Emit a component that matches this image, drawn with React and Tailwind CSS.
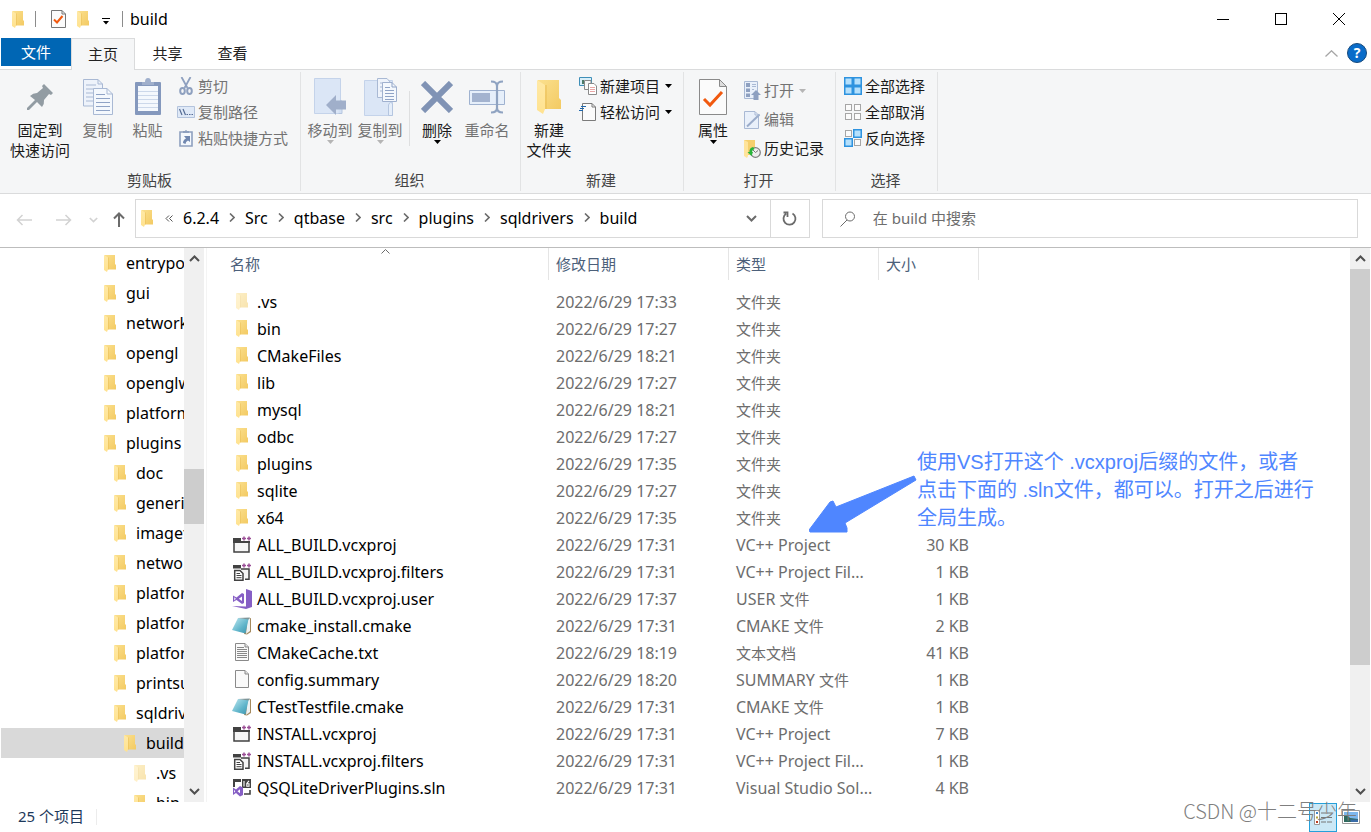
const treeItems = [
  { label: 'entrypo', depth: 0 },
  { label: 'gui', depth: 0 },
  { label: 'network', depth: 0 },
  { label: 'opengl', depth: 0 },
  { label: 'openglw', depth: 0 },
  { label: 'platform', depth: 0 },
  { label: 'plugins', depth: 0 },
  { label: 'doc', depth: 1 },
  { label: 'generi', depth: 1 },
  { label: 'imagef', depth: 1 },
  { label: 'netwo', depth: 1 },
  { label: 'platfor', depth: 1 },
  { label: 'platfor', depth: 1 },
  { label: 'platfor', depth: 1 },
  { label: 'printsu', depth: 1 },
  { label: 'sqldriv', depth: 1 },
  { label: 'build', depth: 2, selected: true },
  { label: '.vs', depth: 3, hidden: true },
  { label: 'bin', depth: 3 },
];

const files = [
  { name: '.vs', date: '2022/6/29 17:33', type: '文件夹', icon: 'hiddenFolder' },
  { name: 'bin', date: '2022/6/29 17:27', type: '文件夹', icon: 'folder' },
  { name: 'CMakeFiles', date: '2022/6/29 18:21', type: '文件夹', icon: 'folder' },
  { name: 'lib', date: '2022/6/29 17:27', type: '文件夹', icon: 'folder' },
  { name: 'mysql', date: '2022/6/29 18:21', type: '文件夹', icon: 'folder' },
  { name: 'odbc', date: '2022/6/29 17:27', type: '文件夹', icon: 'folder' },
  { name: 'plugins', date: '2022/6/29 17:35', type: '文件夹', icon: 'folder' },
  { name: 'sqlite', date: '2022/6/29 17:27', type: '文件夹', icon: 'folder' },
  { name: 'x64', date: '2022/6/29 17:35', type: '文件夹', icon: 'folder' },
  { name: 'ALL_BUILD.vcxproj', date: '2022/6/29 17:31', type: 'VC++ Project', size: '30 KB', icon: 'project' },
  { name: 'ALL_BUILD.vcxproj.filters', date: '2022/6/29 17:31', type: 'VC++ Project Fil...', size: '1 KB', icon: 'filters' },
  { name: 'ALL_BUILD.vcxproj.user', date: '2022/6/29 17:37', type: 'USER 文件', size: '1 KB', icon: 'user' },
  { name: 'cmake_install.cmake', date: '2022/6/29 17:31', type: 'CMAKE 文件', size: '2 KB', icon: 'cmake' },
  { name: 'CMakeCache.txt', date: '2022/6/29 18:19', type: '文本文档', size: '41 KB', icon: 'text' },
  { name: 'config.summary', date: '2022/6/29 18:20', type: 'SUMMARY 文件', size: '1 KB', icon: 'blank' },
  { name: 'CTestTestfile.cmake', date: '2022/6/29 17:31', type: 'CMAKE 文件', size: '1 KB', icon: 'cmake' },
  { name: 'INSTALL.vcxproj', date: '2022/6/29 17:31', type: 'VC++ Project', size: '7 KB', icon: 'project' },
  { name: 'INSTALL.vcxproj.filters', date: '2022/6/29 17:31', type: 'VC++ Project Fil...', size: '1 KB', icon: 'filters' },
  { name: 'QSQLiteDriverPlugins.sln', date: '2022/6/29 17:31', type: 'Visual Studio Sol...', size: '4 KB', icon: 'solution' },
];

const crumbs = ['6.2.4', 'Src', 'qtbase', 'src', 'plugins', 'sqldrivers', 'build'];

/* ---------- Icons ---------- */

function FolderIcon({ className = 'h-[17px] w-3' }) {
  return (
    <svg viewBox="0 0 24 34" preserveAspectRatio="none" className={`shrink-0 ${className}`}>
      <defs>
        <linearGradient id="folderBack" x1="0" y1="0" x2="1" y2="1">
          <stop offset="0" stopColor="#fbe08e" />
          <stop offset="1" stopColor="#f3ca63" />
        </linearGradient>
        <linearGradient id="folderFlap" x1="0" y1="0" x2="0" y2="1">
          <stop offset="0" stopColor="#ffe9a6" />
          <stop offset="1" stopColor="#ffe28f" />
        </linearGradient>
      </defs>
      <path d="M1 0H22V18L24 20V29H1Z" fill="url(#folderBack)" />
      <path d="M0 0L8 5V29L6 34L0 30Z" fill="url(#folderFlap)" />
      <path d="M8 5V29H10V5Z" fill="#e5b748" opacity=".4" />
    </svg>
  );
}

function PlusPlus() {
  return <path d="M10 2.500H14M12 .500V4.500M15 2.500H19M17 .500V4.500" stroke="#9b4f96" strokeWidth="1.500" />;
}

function ProjectIcon() {
  return (
    <svg viewBox="0 0 20 18" className="h-[18px] w-5 shrink-0" fill="none">
      <path d="M2 6H17V16H2Z" fill="#f6f6f6" stroke="#424242" strokeWidth="1.500" />
      <path d="M1 2H9V5H18V7H1Z" fill="#424242" />
      <PlusPlus />
    </svg>
  );
}

function FiltersIcon() {
  return (
    <svg viewBox="0 0 20 18" className="h-[18px] w-5 shrink-0" fill="none">
      <path d="M1 2H9V5.500H1Z" fill="#424242" />
      <path d="M9 6H17V16.200H13" fill="#f6f6f6" stroke="#424242" strokeWidth="1.500" />
      <path d="M2.700 7.500H8L11 10.500V17.200H2.700Z" fill="#fff" stroke="#424242" strokeWidth="1.500" />
      <path d="M4.500 10.500H8M4.500 12.500H9.500M4.500 14.700H9.500" stroke="#424242" />
      <PlusPlus />
    </svg>
  );
}

function VisualStudioIcon() {
  return (
    <svg viewBox="0 0 20 20" className="h-5 w-5 shrink-0">
      <path d="M14 0L20 2V18L14 20L0 17L14 17.500Z" fill="#865fc5" />
      <path d="M1 6.500L4.500 8.500L10 4L12 5V14L10 15L4.500 11L1 13ZM2.300 8.200V11.500L3.800 9.800ZM10 7.500L6.800 9.800L10 12Z" fill="#865fc5" fillRule="evenodd" />
    </svg>
  );
}

function NotebookIcon() {
  return (
    <svg viewBox="0 0 20 18" className="h-[18px] w-5 shrink-0">
      <defs>
        <linearGradient id="notebook" x1="0" y1="0" x2="1" y2="1">
          <stop offset="0" stopColor="#bfe9f1" />
          <stop offset=".6" stopColor="#5fb4ca" />
          <stop offset="1" stopColor="#3d93ac" />
        </linearGradient>
      </defs>
      <path d="M16 2L19 1V15L15 17.500L12 17Z" fill="#a58a5e" />
      <path d="M15.500 2L18 2V14L14 17Z" fill="#edf1f2" />
      <path d="M6 1L16.500 2L13.500 16.500L0 13Z" fill="url(#notebook)" />
      <path d="M6 1L18 .500L16.500 2.500Z" fill="#7e9599" />
    </svg>
  );
}

function PageIcon({ lines }) {
  return (
    <svg viewBox="0 0 16 19" className="h-[19px] w-4 shrink-0" fill="none">
      <path d="M1.500 .500H11L14.500 4V17.500H1.500Z" fill="#fafafa" stroke="#8a8a8a" />
      <path d="M11 .500V4H14.500" stroke="#8a8a8a" fill="#e2e2e2" />
      {lines && <path d="M3 4.500H10M3 6.500H13M3 8.500H13M3 10.500H13M3 12.500H13M3 14.500H13" stroke="#888" />}
    </svg>
  );
}

function SolutionIcon() {
  return (
    <svg viewBox="0 0 20 19" className="h-[19px] w-5 shrink-0" fill="none">
      <path d="M1 1H9V4H3V9H1Z" fill="#424242" />
      <path d="M10 1H19V10H10Z" fill="#424242" />
      <path d="M12 3V8.500M17 2.800L14.800 5.500V8.300H17V5.800H15" stroke="#fff" strokeWidth="1.100" />
      <path d="M12 16H18V12" stroke="#424242" strokeWidth="1.600" />
      <path d="M1 9.500L4 11.500L8 8L11 9.500V17L8 18.500L4 15L1 17ZM2 12V14.800L3.300 13.300ZM8 11.300L5.500 13.300L8 15.200Z" fill="#865fc5" fillRule="evenodd" />
    </svg>
  );
}

function FileIcon({ kind }) {
  switch (kind) {
    case 'folder':
      return <FolderIcon />;
    case 'hiddenFolder':
      return <FolderIcon className="h-[17px] w-3 opacity-50" />;
    case 'project':
      return <ProjectIcon />;
    case 'filters':
      return <FiltersIcon />;
    case 'user':
      return <VisualStudioIcon />;
    case 'cmake':
      return <NotebookIcon />;
    case 'text':
      return <PageIcon lines />;
    case 'solution':
      return <SolutionIcon />;
    default:
      return <PageIcon />;
  }
}

function CheckDocIcon({ className }) {
  return (
    <svg viewBox="0 0 28 36" className={className} fill="none">
      <path d="M.500 .500H20.500L27.500 7.500V35.500H.500Z" fill="#fbfbfb" stroke="#8a8a8a" />
      <path d="M20.500 .500V7.500H27.500Z" fill="#ddd" stroke="#8a8a8a" />
      <path d="M5 20L11 26L23 13" stroke="#f1590f" strokeWidth="3" />
    </svg>
  );
}

function SmallCheckDocIcon() {
  return (
    <svg viewBox="0 0 15 18" className="h-[18px] w-[15px]" fill="none">
      <path d="M.500 .500H11L14.500 4V17.500H.500Z" fill="#fbfbfb" stroke="#777" />
      <path d="M11 .500V4H14.500" stroke="#777" />
      <path d="M3 9.500L6 12.500L11.500 6" stroke="#f1590f" strokeWidth="2" />
    </svg>
  );
}

function PinIcon() {
  return (
    <svg viewBox="0 0 26 26" className="h-[26px] w-[26px]">
      <path d="M17 0L26 9L24 11L22 10L17 16Q17.500 20 15 23L10 18L2 26H0V24L8 16L3 12Q6 9 10 9L16 4L15 2Z" fill="#929ca3" />
    </svg>
  );
}

function CopyIcon() {
  return (
    <svg viewBox="0 0 30 36" className="h-9 w-[30px]" fill="none" stroke="#a9b9d4">
      <path d="M.500 .500H15L19.500 5V27H.500Z" fill="#eef3fb" />
      <path d="M15 .500V5H19.500M3 6H13M3 10H17M3 14H10M3 18H10M3 22H10" />
      <path d="M10.500 9.500H24L29.500 15V35.500H10.500Z" fill="#f4f8fd" />
      <path d="M24 9.500V15H29.500" />
      <path d="M13 15.500H22M13 19.500H27M13 23.500H27M13 27.500H27M13 31.500H27" stroke="#8fa3c6" />
    </svg>
  );
}

function PasteIcon() {
  return (
    <svg viewBox="0 0 26 37" className="h-[37px] w-[26px]">
      <rect y="4" width="26" height="33" rx="1" fill="#8498bd" />
      <path d="M3 8H23V33H3Z" fill="#f4f8fd" />
      <path d="M3 13.500H23M3 17.500H23M3 21.500H23M3 25.500H23M3 29.500H23" stroke="#ccd8ea" />
      <path d="M7 7V4H10Q10 0 13 0T16 4H19V7Z" fill="#9fafcc" />
    </svg>
  );
}

function ScissorsIcon() {
  return (
    <svg viewBox="0 0 14 18" className="h-[18px] w-[14px]" fill="none" stroke="#8ea0bf">
      <path d="M2.500 0L8.500 11M11.500 0L5.500 11" strokeWidth="1.800" />
      <ellipse cx="3.500" cy="14" rx="2.300" ry="3" strokeWidth="2" />
      <ellipse cx="10.500" cy="14" rx="2.300" ry="3" strokeWidth="2" />
    </svg>
  );
}

function CopyPathIcon() {
  return (
    <svg viewBox="0 0 18 12" className="h-3 w-[18px]">
      <path d="M.500 .500H17.500V11.500H.500Z" fill="#dfe9f7" stroke="#b3c3dc" />
      <path d="M2.500 3L5 9M6 3L8.500 9M9.500 8.500H11M12 8.500H13.500M14.500 8.500H16" stroke="#566d95" strokeWidth="1.200" />
    </svg>
  );
}

function PasteShortcutIcon() {
  return (
    <svg viewBox="0 0 14 18" className="h-[18px] w-[14px]">
      <path d="M1 3H13V17H1Z" fill="#f4f8fd" stroke="#8ea0bf" strokeWidth="1.600" />
      <path d="M4 4V2H6Q7 0 8 2H10V4Z" fill="#8ea0bf" />
      <path d="M5 7H11V13L9 11.500Q6.500 12.500 6.500 15L4 14Q4 11 7 9.500Z" fill="#7087b0" />
    </svg>
  );
}

function MoveToIcon() {
  return (
    <svg viewBox="0 0 32 37" className="h-[37px] w-8">
      <path d="M.500 .500H26.500V35.500H.500Z" fill="#dbe6f6" stroke="#c4d3ea" />
      <path d="M25 24Q28 20 28 26V35.500H24.500" fill="#d3e0f3" stroke="#b5c6e0" />
      <path d="M12 27L22 17V22.500H32V31.500H22V37Z" fill="#a0afca" />
    </svg>
  );
}

function CopyToIcon() {
  return (
    <svg viewBox="0 0 33 38" className="h-[38px] w-[33px]" fill="none">
      <path d="M.500 2.500H28.500V37.500H.500Z" fill="#dbe6f6" stroke="#c4d3ea" />
      <path d="M24.500 37.500V27Q26.500 22 28.500 26V37.500Z" fill="#e5eefa" stroke="#b5c6e0" />
      <path d="M13.500 .500H23L27 5V19.500H13.500Z" fill="#eef3fb" stroke="#a9b9d4" />
      <path d="M16 5H22M16 9H19M16 13H19" stroke="#a9b9d4" />
      <path d="M18.500 4.500H28L32.500 9V23.500H18.500Z" fill="#f4f8fd" stroke="#a0b1cf" />
      <path d="M28 4.500V9H32.500M21 9.500H26M21 12.500H30M21 15.500H30M21 18.500H30M21 21.500H30" stroke="#8fa3c6" />
    </svg>
  );
}

function DeleteIcon() {
  return (
    <svg viewBox="0 0 32 32" className="h-8 w-8">
      <path d="M2 2L30 30M30 2L2 30" stroke="#8093b5" strokeWidth="6" />
    </svg>
  );
}

function RenameIcon() {
  return (
    <svg viewBox="0 0 36 34" className="h-[34px] w-9" fill="none">
      <path d="M.500 10.500H35.500V24.500H.500Z" fill="#e6effa" stroke="#9fb2d0" />
      <path d="M3 13H21V22H3Z" fill="#a3b3cf" />
      <path d="M22 1.500Q28 1.500 28 6V28Q28 32.500 22 32.500M34 1.500Q28 1.500 28 6M28 28Q28 32.500 34 32.500" stroke="#8fa3c1" strokeWidth="2.200" />
    </svg>
  );
}

function NewItemIcon() {
  return (
    <svg viewBox="0 0 18 18" className="h-[18px] w-[18px]" fill="none">
      <path d="M.500 .500H12.500V8.500H.500Z" fill="#d9eff9" stroke="#3f8fb8" />
      <path d="M3 3H5V7H3Z" fill="#4c7a68" />
      <path d="M5.500 3.500H12V12.500H5.500Z" fill="#f8f8f8" stroke="#8a8a8a" />
      <path d="M9.500 6.500H15L17.500 9V17.500H9.500Z" fill="#fff" stroke="#8a8a8a" />
      <path d="M11 10.500H16M11 12.500H16M11 14.500H16" stroke="#eaa6a6" />
    </svg>
  );
}

function EasyAccessIcon() {
  return (
    <svg viewBox="0 0 18 18" className="h-[18px] w-[18px]" fill="none">
      <path d="M3.500 .500H13L16.500 4V17.500H3.500Z" fill="#fbfbfb" stroke="#7b7b7b" />
      <path d="M13 .500V4H16.500" stroke="#7b7b7b" />
      <path d="M2 3.500H7M1 5.500H5M0 7.500H4" stroke="#1f68ad" strokeWidth="1.200" />
    </svg>
  );
}

function OpenIcon() {
  return (
    <svg viewBox="0 0 17 19" className="h-[19px] w-[17px]" fill="none">
      <path d="M.500 .500H13.500V17.500H.500Z" fill="#e9f0fa" stroke="#a9b9d4" />
      <path d="M2 2H6V6H2ZM2 7.500H6V11H2ZM2 12.500H6V16H2Z" fill="#8ea0c0" />
      <path d="M8 3.500H12M8 5.500H12M8 8.500H10" stroke="#a9b9d4" />
      <path d="M12 9L17 14H14.500V19H9.500V14H7Z" fill="#8ea0c0" />
    </svg>
  );
}

function EditIcon() {
  return (
    <svg viewBox="0 0 17 18" className="h-[18px] w-[17px]" fill="none">
      <path d="M.500 .500H11L14.500 4V17.500H.500Z" fill="#e9f0fa" stroke="#a9b9d4" />
      <path d="M3 15.500L15.500 3.500" stroke="#9bacca" strokeWidth="2" />
      <path d="M11 1V4H16" stroke="#a9b9d4" />
    </svg>
  );
}

function HistoryIcon() {
  return (
    <svg viewBox="0 0 17 18" className="h-[18px] w-[17px]">
      <path d="M0 0H11V15H0Z" fill="#f5cf6d" />
      <path d="M0 0L4 2V16L3 18L0 16Z" fill="#ffe49b" />
      <circle cx="11.500" cy="12.500" r="4.800" fill="#eee" stroke="#7d7d7d" strokeWidth="1.200" />
      <path d="M9 10L11.500 12.500L14 10.500" stroke="#777" fill="none" />
      <path d="M9 7Q5 8 5.500 12H3.500L7.500 16L9 12H8Q8 10 10.500 9Z" fill="#29b43a" />
    </svg>
  );
}

function SelectIcon({ filled }) {
  const cells = [[0.5, 0.5], [9.5, 0.5], [0.5, 9.5], [9.5, 9.5]];
  return (
    <svg viewBox="0 0 18 18" className="h-[18px] w-[18px]">
      {cells.map(([x, y], i) =>
        filled.includes(i) ? (
          <rect key={i} x={x + 0.25} y={y + 0.25} width="7.500" height="7.500" fill="#b5e0fc" stroke="#2e93df" strokeWidth="1.500" />
        ) : (
          <rect key={i} x={x + 1} y={y + 1} width="6" height="6" fill="#fbfbfb" stroke="#a6a6a6" />
        )
      )}
    </svg>
  );
}

function Chevron({ dir = 'down', className = 'h-[7px] w-[11px]' }) {
  const paths = { down: 'M1 1L5.500 5.500L10 1', up: 'M1 6L5.500 1.500L10 6' };
  return (
    <svg viewBox="0 0 11 7" className={className} fill="none" stroke="currentColor" strokeWidth="2">
      <path d={paths[dir]} />
    </svg>
  );
}

function Caret({ className = 'text-black' }) {
  return (
    <svg viewBox="0 0 7 4" className={`h-1 w-[7px] shrink-0 ${className}`}>
      <path d="M0 0H7L3.500 4Z" fill="currentColor" />
    </svg>
  );
}

/* ---------- Ribbon ---------- */

function RibbonGroup({ title, className, children }) {
  return (
    <section aria-label={title} className={`flex h-[119px] shrink-0 flex-col border-r border-[#e2e3e4] ${className}`}>
      <div className="flex flex-1 items-start">{children}</div>
      <div className="pr-[2px] pb-px text-center leading-5 text-[#444]">{title}</div>
    </section>
  );
}

function LargeButton({ icon, lines, caret, disabled, className = 'w-[50px]' }) {
  return (
    <button type="button" className={`flex shrink-0 flex-col items-center pt-[6px] leading-5 ${disabled ? 'text-[#737373]' : 'text-[#1a1a1a]'} ${className}`}>
      <span className="mb-[5px] flex h-[37px] items-center">{icon}</span>
      {lines.map((line) => (
        <span key={line} className="whitespace-nowrap">{line}</span>
      ))}
      {caret && <Caret className={disabled ? 'text-[#b5b5b5]' : 'text-black'} />}
    </button>
  );
}

function SmallButton({ icon, label, caret, disabled, className = 'h-[26px]' }) {
  return (
    <button type="button" className={`flex items-center whitespace-nowrap ${disabled ? 'text-[#737373]' : 'text-[#1a1a1a]'} ${className}`}>
      <span className="mr-[3px] flex w-[18px] justify-center">{icon}</span>
      {label}
      {caret && <span className="ml-[5px]"><Caret className={disabled ? 'text-[#b5b5b5]' : 'text-black'} /></span>}
    </button>
  );
}

function Ribbon() {
  return (
    <div className="flex border-b border-[#dadbdc] bg-[#f5f6f7] pt-[2px] pb-[2px] pl-px">
      <RibbonGroup title="剪贴板" className="w-[300px]">
        <LargeButton className="ml-1 w-[70px]" icon={<PinIcon />} lines={['固定到', '快速访问']} />
        <LargeButton className="w-[45px]" disabled icon={<CopyIcon />} lines={['复制']} />
        <LargeButton className="w-[55px]" disabled icon={<PasteIcon />} lines={['粘贴']} />
        <div className="flex flex-col pt-px pl-[2px]">
          <SmallButton disabled icon={<ScissorsIcon />} label="剪切" />
          <SmallButton disabled icon={<CopyPathIcon />} label="复制路径" />
          <SmallButton disabled icon={<PasteShortcutIcon />} label="粘贴快捷方式" />
        </div>
      </RibbonGroup>
      <RibbonGroup title="组织" className="w-[220px]">
        <LargeButton className="ml-1 w-[50px]" disabled caret icon={<MoveToIcon />} lines={['移动到']} />
        <LargeButton disabled caret icon={<CopyToIcon />} lines={['复制到']} />
        <span className="mt-[19px] ml-1 h-[55px] w-px bg-[#dedfe0]" />
        <LargeButton className="ml-[2px] w-[50px]" caret icon={<DeleteIcon />} lines={['删除']} />
        <LargeButton disabled icon={<RenameIcon />} lines={['重命名']} />
      </RibbonGroup>
      <RibbonGroup title="新建" className="w-[163px]">
        <LargeButton className="ml-[3px] w-[50px]" icon={<FolderIcon className="h-[34px] w-6" />} lines={['新建', '文件夹']} />
        <div className="flex flex-col pt-px pl-[5px]">
          <SmallButton caret icon={<NewItemIcon />} label="新建项目" />
          <SmallButton caret icon={<EasyAccessIcon />} label="轻松访问" />
        </div>
      </RibbonGroup>
      <RibbonGroup title="打开" className="w-[152px]">
        <LargeButton className="ml-1 w-[50px]" caret icon={<CheckDocIcon className="h-9 w-7" />} lines={['属性']} />
        <div className="flex flex-col pt-1 pl-[5px]">
          <SmallButton className="h-[29px]" disabled caret icon={<OpenIcon />} label="打开" />
          <SmallButton className="h-[29px]" disabled icon={<EditIcon />} label="编辑" />
          <SmallButton className="h-[29px]" icon={<HistoryIcon />} label="历史记录" />
        </div>
      </RibbonGroup>
      <RibbonGroup title="选择" className="w-[102px]">
        <div className="flex flex-col pt-px pl-2">
          <SmallButton icon={<SelectIcon filled={[0, 1, 2, 3]} />} label="全部选择" />
          <SmallButton icon={<SelectIcon filled={[]} />} label="全部取消" />
          <SmallButton icon={<SelectIcon filled={[1, 2]} />} label="反向选择" />
        </div>
      </RibbonGroup>
    </div>
  );
}

/* ---------- Window chrome ---------- */

function TitleBar() {
  return (
    <header className="flex h-[38px] shrink-0 items-center pr-[3px] pl-3 text-base">
      <FolderIcon />
      <span className="ml-[11px] h-4 w-px bg-[#8c8c8c]" />
      <button type="button" aria-label="属性" className="ml-[15px]"><SmallCheckDocIcon /></button>
      <button type="button" aria-label="新建文件夹" className="ml-[11px]"><FolderIcon /></button>
      <button type="button" aria-label="自定义快速访问工具栏" className="ml-[13px]">
        <svg viewBox="0 0 8 7" className="mt-1 h-[7px] w-2">
          <path d="M0 0H8V1H0ZM1 3H7L4 6.500Z" />
        </svg>
      </button>
      <span className="ml-3 h-4 w-px bg-[#8c8c8c]" />
      <h1 className="ml-[7px] leading-6">build</h1>
      <div className="ml-auto flex self-stretch">
        <button type="button" aria-label="最小化" className="flex w-[58px] items-center justify-center">
          <span className="h-px w-3 bg-black" />
        </button>
        <button type="button" aria-label="最大化" className="flex w-[58px] items-center justify-center">
          <span className="h-3 w-3 border border-black" />
        </button>
        <button type="button" aria-label="关闭" className="flex w-[58px] items-center justify-center">
          <svg viewBox="0 0 12 12" className="h-3 w-3" stroke="#000"><path d="M0 0L12 12M12 0L0 12" /></svg>
        </button>
      </div>
    </header>
  );
}

function TabBar() {
  return (
    <nav className="flex h-8 shrink-0 items-start border-b border-[#dadbdc] pl-px">
      <button type="button" className="h-7 w-[70px] bg-[#0066b4] text-white">文件</button>
      <button type="button" className="h-8 w-16 border border-b-0 border-[#dadbdc] bg-[#f5f6f7] text-[#222]">主页</button>
      <button type="button" className="h-[31px] w-[65px] text-[#222]">共享</button>
      <button type="button" className="h-[31px] w-[65px] text-[#222]">查看</button>
      <div className="ml-auto flex h-[30px] items-center gap-[9px] pr-1">
        <button type="button" aria-label="最小化功能区" className="text-[#a6a6a6]">
          <svg viewBox="0 0 13 7" className="h-[7px] w-[13px]" fill="none" stroke="currentColor" strokeWidth="1.300"><path d="M.500 6.500L6.500 .800L12.500 6.500" /></svg>
        </button>
        <button type="button" aria-label="帮助" className="flex h-5 w-5 items-center justify-center rounded-full border border-[#174a7c] bg-[#0a6cc9] text-sm font-bold text-white">?</button>
      </div>
    </nav>
  );
}

function AddressBar() {
  return (
    <div className="flex h-[53px] shrink-0 items-center pr-[13px] pb-1 text-base">
      <div className="flex w-[135px] shrink-0 items-center pt-[2px] pl-4 text-[#d2d2d2]">
        <button type="button" aria-label="后退">
          <svg viewBox="0 0 16 12" className="h-3 w-4" fill="none" stroke="currentColor" strokeWidth="1.500"><path d="M6.500 1L1.500 6L6.500 11M1.500 6H16" /></svg>
        </button>
        <button type="button" aria-label="前进" className="ml-6">
          <svg viewBox="0 0 16 12" className="h-3 w-4" fill="none" stroke="currentColor" strokeWidth="1.500"><path d="M9.500 1L14.500 6L9.500 11M14.500 6H0" /></svg>
        </button>
        <button type="button" aria-label="最近浏览的位置" className="ml-[17px]">
          <Chevron className="h-[6px] w-[9px]" />
        </button>
        <button type="button" aria-label="上移" className="ml-[15px] text-[#6b6b6b]">
          <svg viewBox="0 0 12 15" className="h-[15px] w-3" fill="none" stroke="currentColor" strokeWidth="2"><path d="M1 6.500L6 1.500L11 6.500M6 1.500V15" /></svg>
        </button>
      </div>
      <div className="flex h-[39px] min-w-0 flex-[675] items-center border border-[#d9d9d9]">
        <span className="ml-[5px]"><FolderIcon /></span>
        <span className="ml-3 text-[#555]">
          <svg viewBox="0 0 8 7" className="h-[7px] w-2" fill="none" stroke="currentColor"><path d="M4 .500L1 3.500L4 6.500M7.500 .500L4.500 3.500L7.500 6.500" /></svg>
        </span>
        <ol className="ml-[10px] flex min-w-0 flex-1 items-center pb-[2px] text-black">
          {crumbs.map((crumb, i) => (
            <li key={crumb} className="flex items-center">
              {i > 0 && (
                <svg viewBox="0 0 6 9" className="mx-[10px] h-[9px] w-[6px]" fill="none" stroke="#6b6b6b" strokeWidth="1.600"><path d="M1 .500L5 4.500L1 8.500" /></svg>
              )}
              <a href="#" className="leading-6">{crumb}</a>
            </li>
          ))}
        </ol>
        <button type="button" aria-label="上一个位置" className="mr-[13px] text-[#6b6b6b]"><Chevron /></button>
        <button type="button" aria-label="刷新" className="flex h-full w-[39px] items-center justify-center border-l border-[#d9d9d9]">
          <svg viewBox="0 0 15 15" className="h-[15px] w-[15px]" fill="none" stroke="#6b6b6b" strokeWidth="1.800"><path d="M10.500 2.500A6 6 0 1 1 4 2.800M1.500 1.500H5.500V6" /></svg>
        </button>
      </div>
      <label className="ml-3 flex h-[39px] min-w-0 flex-[536] items-center border border-[#d9d9d9]">
        <svg viewBox="0 0 16 16" className="ml-[17px] h-4 w-4 shrink-0" fill="none" stroke="#6b6b6b"><circle cx="10" cy="5.500" r="4.500" /><path d="M7 9L.500 15.500" /></svg>
        <input type="search" aria-label="搜索" placeholder="在 build 中搜索" className="ml-[17px] min-w-0 flex-1 bg-transparent text-[15px] outline-none placeholder:text-[#6d6d6d]" />
      </label>
    </div>
  );
}

/* ---------- Panes ---------- */

function Scrollbar({ before, thumb, after }) {
  return (
    <div className="flex w-5 shrink-0 flex-col bg-[#f0f0f0] text-[#505050]">
      <button type="button" aria-label="向上滚动" className="flex h-[21px] items-center justify-center"><Chevron dir="up" /></button>
      <div className="flex flex-1 flex-col">
        <span style={{ flexGrow: before }} />
        <span className="bg-[#cdcdcd]" style={{ flexGrow: thumb }} />
        <span style={{ flexGrow: after }} />
      </div>
      <button type="button" aria-label="向下滚动" className="flex h-[21px] items-center justify-center"><Chevron /></button>
    </div>
  );
}

const indents = ['pl-[103px]', 'pl-[113px]', 'pl-[123px]', 'pl-[133px]'];

function FolderTree() {
  return (
    <aside className="flex w-[206px] shrink-0 pl-px text-base text-black">
      <ul className="min-w-0 flex-1 overflow-hidden">
        {treeItems.map((item, i) => (
          <li key={i} className={item.selected ? 'bg-[#d9d9d9]' : ''}>
            <a href="#" className={`flex h-[30px] items-center whitespace-nowrap ${indents[item.depth]}`}>
              <FolderIcon className={item.hidden ? 'h-[17px] w-3 opacity-50' : 'h-[17px] w-3'} />
              <span className="ml-[10px]">{item.label}</span>
            </a>
          </li>
        ))}
      </ul>
      <div className="mr-[2px] flex">
        <Scrollbar before={200} thumb={55} after={257} />
      </div>
    </aside>
  );
}

// Chinese runs are set one pixel smaller than the Latin text around them
function MixedText({ text }) {
  return text.split(/([\u4e00-\u9fff]+)/).map((part, i) =>
    i % 2 ? <span key={i} className="text-[15px]">{part}</span> : part
  );
}

function HeaderCell({ children, className = 'pl-[7px]' }) {
  return (
    <th scope="col" className="p-0 pb-2 text-left text-[15px] font-normal text-[#4c607a]">
      <div className={`flex h-8 items-center border-r border-[#e5e5e5] ${className}`}>{children}</div>
    </th>
  );
}

function FileTable() {
  return (
    <table className="w-full table-fixed border-collapse text-base">
      <colgroup>
        <col className="w-[342px]" />
        <col className="w-[180px]" />
        <col className="w-[150px]" />
        <col className="w-[100px]" />
        <col />
      </colgroup>
      <thead>
        <tr>
          <HeaderCell className="relative pl-[23px]">
            名称
            <svg viewBox="0 0 9 5" className="absolute top-px left-[51%] h-[5px] w-[9px]" fill="none" stroke="#6b6b6b"><path d="M.500 4.500L4.500 .500L8.500 4.500" /></svg>
          </HeaderCell>
          <HeaderCell>修改日期</HeaderCell>
          <HeaderCell>类型</HeaderCell>
          <HeaderCell>大小</HeaderCell>
          <td />
        </tr>
      </thead>
      <tbody className="text-[#6d6d6d]">
        {files.map((file) => (
          <tr key={file.name} className="h-[27px] whitespace-nowrap">
            <td className="p-0 pl-[25px] text-black">
              <div className="flex items-center gap-[5px]">
                <span className="flex h-5 w-5 items-center justify-center">
                  <FileIcon kind={file.icon} />
                </span>
                {file.name}
              </div>
            </td>
            <td className="p-0 pl-[7px]">{file.date}</td>
            <td className="p-0 pl-[7px]"><MixedText text={file.type} /></td>
            <td className="p-0 pr-[10px] text-right">{file.size}</td>
            <td />
          </tr>
        ))}
      </tbody>
    </table>
  );
}

function Annotation() {
  return (
    <>
      <svg viewBox="0 0 108 58" className="absolute top-[227px] left-[602px] h-[58px] w-[108px]">
        <path d="M105 1L107 5L36 48L38 53V57H1L0 55L21 27L24 26L27 32Z" fill="#4f86ff" stroke="#4f86ff" strokeLinejoin="round" />
      </svg>
      <p className="absolute top-[200px] left-[710px] font-['Liberation_Sans','Noto_Sans_CJK_SC',sans-serif] text-xl leading-7 whitespace-nowrap text-[#4f86ff]">
        使用VS打开这个 .vcxproj后缀的文件，或者<br />
        点击下面的 .sln文件，都可以。打开之后进行<br />
        全局生成。
      </p>
    </>
  );
}

function StatusBar() {
  return (
    <footer className="relative flex h-[30px] shrink-0 items-center pr-[11px] pl-[18px] text-[#1e395b]">
      <span className="pb-[2px]">25 个项目</span>
      <span className="ml-3 h-4 w-px bg-[#ececec]" />
      <div className="ml-auto flex items-center gap-[5px]">
        <button type="button" aria-label="详细信息" className="flex h-[29px] w-7 items-center justify-center border border-[#26a0da] bg-[#cbe8f6]">
          <svg viewBox="0 0 18 15" className="h-[15px] w-[18px]" fill="none">
            <path d="M.500 .500H5.500V14.500H.500Z" fill="#fff" stroke="#999" />
            <path d="M2 2H4V4H2Z" fill="#3f86c9" />
            <path d="M2 6.500H4V8.500H2Z" fill="#b3a23a" />
            <path d="M2 11H4V13H2Z" fill="#bd3c1f" />
            <path d="M7 3H12M13 3H18M7 7.500H12M13 7.500H18M7 12H12M13 12H18" stroke="#777" />
          </svg>
        </button>
        <button type="button" aria-label="大缩略图">
          <svg viewBox="0 0 18 14" className="h-[14px] w-[18px]">
            <path d="M.500 .500H17.500V13.500H.500Z" fill="#fff" stroke="#999" />
            <path d="M2 2H16V12H2Z" fill="#7db8ee" />
            <path d="M2 5Q6 5 8 8L16 9V12H2Z" fill="#2f6a5e" />
            <path d="M8 9.500H16V12H9Z" fill="#3a6ca8" />
          </svg>
        </button>
      </div>
      <span className="pointer-events-none absolute right-[14px] bottom-[7px] font-['Noto_Sans_CJK_SC',sans-serif] text-xl leading-7 font-light whitespace-nowrap text-[#7f7f7f]">CSDN @十二号少年</span>
    </footer>
  );
}

export default function App() {
  return (
    <div className="flex h-screen flex-col overflow-hidden bg-white font-['Noto_Sans','Noto_Sans_CJK_SC',sans-serif] text-[15px]">
      <TitleBar />
      <TabBar />
      <Ribbon />
      <AddressBar />
      <main className="flex min-h-0 flex-1 border-t border-[#bdbdbd]">
        <FolderTree />
        <div className="relative min-w-0 flex-1 overflow-hidden border-l border-[#f4f4f4]">
          <FileTable />
          <Annotation />
        </div>
        <div className="mr-px flex">
          <Scrollbar before={0} thumb={396} after={116} />
        </div>
      </main>
      <StatusBar />
    </div>
  );
}
